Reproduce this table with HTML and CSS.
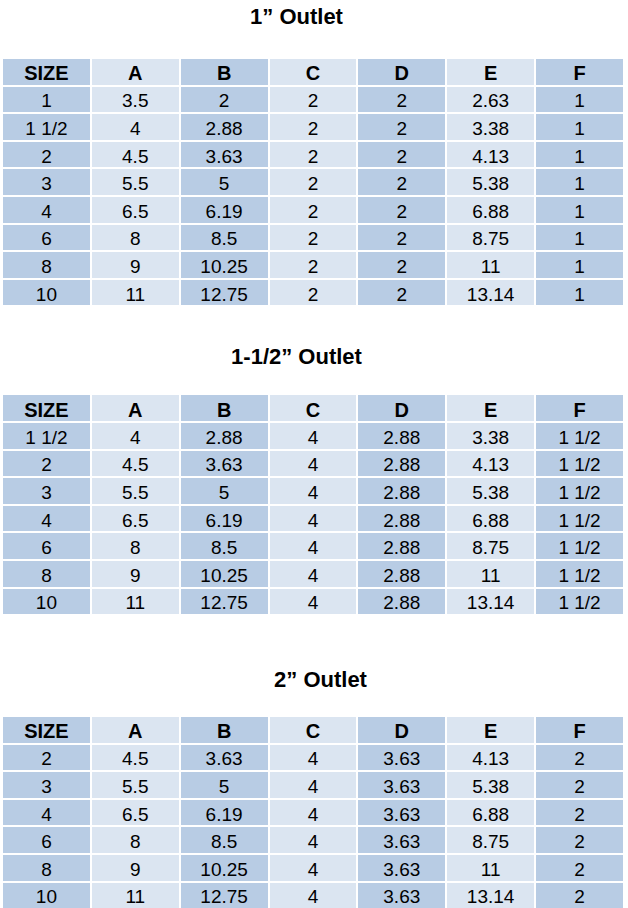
FILE: index.html
```html
<!DOCTYPE html>
<html>
<head>
<meta charset="utf-8">
<link rel="stylesheet" href="styles.css">
</head>
<body>
<div class="page">
  <section class="block block-1">
    <h2 class="title title-left">1” Outlet</h2>
    <table class="dims">
      <tr class="head"><td>SIZE</td><td>A</td><td>B</td><td>C</td><td>D</td><td>E</td><td>F</td></tr>
      <tr><td>1</td><td>3.5</td><td>2</td><td>2</td><td>2</td><td>2.63</td><td>1</td></tr>
      <tr><td>1 1/2</td><td>4</td><td>2.88</td><td>2</td><td>2</td><td>3.38</td><td>1</td></tr>
      <tr><td>2</td><td>4.5</td><td>3.63</td><td>2</td><td>2</td><td>4.13</td><td>1</td></tr>
      <tr><td>3</td><td>5.5</td><td>5</td><td>2</td><td>2</td><td>5.38</td><td>1</td></tr>
      <tr><td>4</td><td>6.5</td><td>6.19</td><td>2</td><td>2</td><td>6.88</td><td>1</td></tr>
      <tr><td>6</td><td>8</td><td>8.5</td><td>2</td><td>2</td><td>8.75</td><td>1</td></tr>
      <tr><td>8</td><td>9</td><td>10.25</td><td>2</td><td>2</td><td>11</td><td>1</td></tr>
      <tr><td>10</td><td>11</td><td>12.75</td><td>2</td><td>2</td><td>13.14</td><td>1</td></tr>
    </table>
  </section>
  <section class="block block-2">
    <h2 class="title title-left">1-1/2” Outlet</h2>
    <table class="dims">
      <tr class="head"><td>SIZE</td><td>A</td><td>B</td><td>C</td><td>D</td><td>E</td><td>F</td></tr>
      <tr><td>1 1/2</td><td>4</td><td>2.88</td><td>4</td><td>2.88</td><td>3.38</td><td>1 1/2</td></tr>
      <tr><td>2</td><td>4.5</td><td>3.63</td><td>4</td><td>2.88</td><td>4.13</td><td>1 1/2</td></tr>
      <tr><td>3</td><td>5.5</td><td>5</td><td>4</td><td>2.88</td><td>5.38</td><td>1 1/2</td></tr>
      <tr><td>4</td><td>6.5</td><td>6.19</td><td>4</td><td>2.88</td><td>6.88</td><td>1 1/2</td></tr>
      <tr><td>6</td><td>8</td><td>8.5</td><td>4</td><td>2.88</td><td>8.75</td><td>1 1/2</td></tr>
      <tr><td>8</td><td>9</td><td>10.25</td><td>4</td><td>2.88</td><td>11</td><td>1 1/2</td></tr>
      <tr><td>10</td><td>11</td><td>12.75</td><td>4</td><td>2.88</td><td>13.14</td><td>1 1/2</td></tr>
    </table>
  </section>
  <section class="block block-3">
    <h2 class="title title-right">2” Outlet</h2>
    <table class="dims">
      <tr class="head"><td>SIZE</td><td>A</td><td>B</td><td>C</td><td>D</td><td>E</td><td>F</td></tr>
      <tr><td>2</td><td>4.5</td><td>3.63</td><td>4</td><td>3.63</td><td>4.13</td><td>2</td></tr>
      <tr><td>3</td><td>5.5</td><td>5</td><td>4</td><td>3.63</td><td>5.38</td><td>2</td></tr>
      <tr><td>4</td><td>6.5</td><td>6.19</td><td>4</td><td>3.63</td><td>6.88</td><td>2</td></tr>
      <tr><td>6</td><td>8</td><td>8.5</td><td>4</td><td>3.63</td><td>8.75</td><td>2</td></tr>
      <tr><td>8</td><td>9</td><td>10.25</td><td>4</td><td>3.63</td><td>11</td><td>2</td></tr>
      <tr><td>10</td><td>11</td><td>12.75</td><td>4</td><td>3.63</td><td>13.14</td><td>2</td></tr>
    </table>
  </section>
</div>
</body>
</html>
```

FILE: styles.css
```css
html, body {
  margin: 0;
  padding: 0;
  background: #ffffff;
}

body {
  font-family: "Liberation Sans", Arial, sans-serif;
  color: #000000;
  overflow: hidden;
}

.page {
  width: 628px;
  height: 908px;
  padding-left: 1px;
  box-sizing: border-box;
}

.block-1 {
  padding-top: 5px;
}

.block-2 {
  padding-top: 38px;
}

.block-3 {
  padding-top: 52px;
}

.title {
  margin: 0;
  font-size: 22px;
  line-height: 24px;
  font-weight: bold;
  text-align: center;
}

.title-left {
  padding-right: 36px;
}

.title-right {
  padding-left: 12px;
}

.block-1 .title {
  margin-bottom: 28px;
}

.block-2 .title {
  margin-bottom: 24px;
}

.block-3 .title {
  margin-bottom: 23px;
}

.dims {
  width: 624px;
  table-layout: fixed;
  border-collapse: separate;
  border-spacing: 2px;
}

.dims td {
  height: 25.6px;
  padding: 4px 0 0 0;
  box-sizing: border-box;
  text-align: center;
  vertical-align: middle;
  font-size: 19px;
  line-height: 20px;
  background: #b8cce4;
}

.dims td:nth-child(even) {
  background: #dbe5f1;
}

.dims .head td {
  font-weight: bold;
  font-size: 20px;
  padding-top: 3px;
}
```
